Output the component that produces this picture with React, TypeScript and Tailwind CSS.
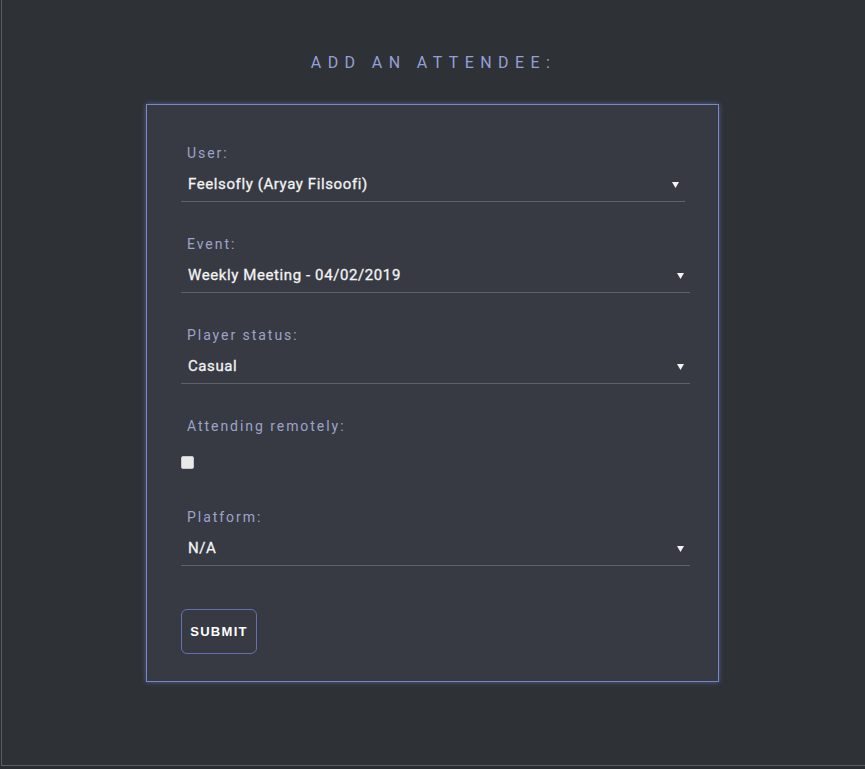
import React from 'react'

// --- Types ---

interface SelectFieldProps {
  label: string
  value: string
  width: string
}

const Arrow = () => (
  <svg width="7" height="6" viewBox="0 0 7 6" className="shrink-0">
    <path d="M0 0h7L3.5 6z" fill="#f4f4f4" />
  </svg>
)

function FieldLabel({ children }: { children: React.ReactNode }) {
  return (
    <div className="h-5 pl-[6px] text-[14px] leading-5 tracking-[1.95px] text-[#9ea3c9]">
      {children}
    </div>
  )
}

function SelectBox({ value, width }: { value: string; width: string }) {
  return (
    <div
      className={`mt-[7px] flex h-[32px] items-center justify-between border-b border-[#5e6169] pb-[2px] pl-[7px] pr-[6px] ${width}`}
    >
      <span className="text-[15px] font-normal tracking-[0.6px] text-[#f3f3f3] [-webkit-text-stroke:0.3px_#f3f3f3]">
        {value}
      </span>
      <Arrow />
    </div>
  )
}

function SelectField({ label, value, width }: SelectFieldProps) {
  return (
    <div className="mb-[32px]">
      <FieldLabel>{label}</FieldLabel>
      <SelectBox value={value} width={width} />
    </div>
  )
}

export default function App() {
  return (
    <div className="h-[769px] w-full bg-[#2a2d31] font-['Roboto',sans-serif]">
      <div className="ml-px h-[766px] border-b border-l border-[#5b5e64] bg-[#2e3136] pt-[51px]">
        <h1 className="h-6 text-center text-[16px] font-normal leading-6 tracking-[0.4em] text-[#95a0d8]">
          ADD AN ATTENDEE:
        </h1>

        <form className="ml-[144px] mt-[29px] w-[573px] border border-[#7886d0] bg-[#373a43] pb-[27px] pl-[34px] pt-[38px] shadow-[0_0_5px_rgba(120,136,214,0.55)]">
          <SelectField label="User:" value="Feelsofly (Aryay Filsoofi)" width="w-[504px]" />
          <SelectField label="Event:" value="Weekly Meeting - 04/02/2019" width="w-[509px]" />
          <SelectField label="Player status:" value="Casual" width="w-[509px]" />

          {/* Checkbox field */}
          <div className="mb-[38px]">
            <FieldLabel>Attending remotely:</FieldLabel>
            <div className="mt-[20px] h-[13px] w-[13px] rounded-[2px] border border-[#c9c9c9] bg-[#e9e9e9]" />
          </div>

          <div>
            <FieldLabel>Platform:</FieldLabel>
            <SelectBox value="N/A" width="w-[509px]" />
          </div>

          <button
            type="button"
            className="mt-[43px] flex h-[45px] w-[76px] items-center justify-center rounded-[6px] border border-[#6671b4] font-['Liberation_Sans',sans-serif] text-[13px] font-bold tracking-[1.3px] text-white"
          >
            SUBMIT
          </button>
        </form>
      </div>
    </div>
  )
}
